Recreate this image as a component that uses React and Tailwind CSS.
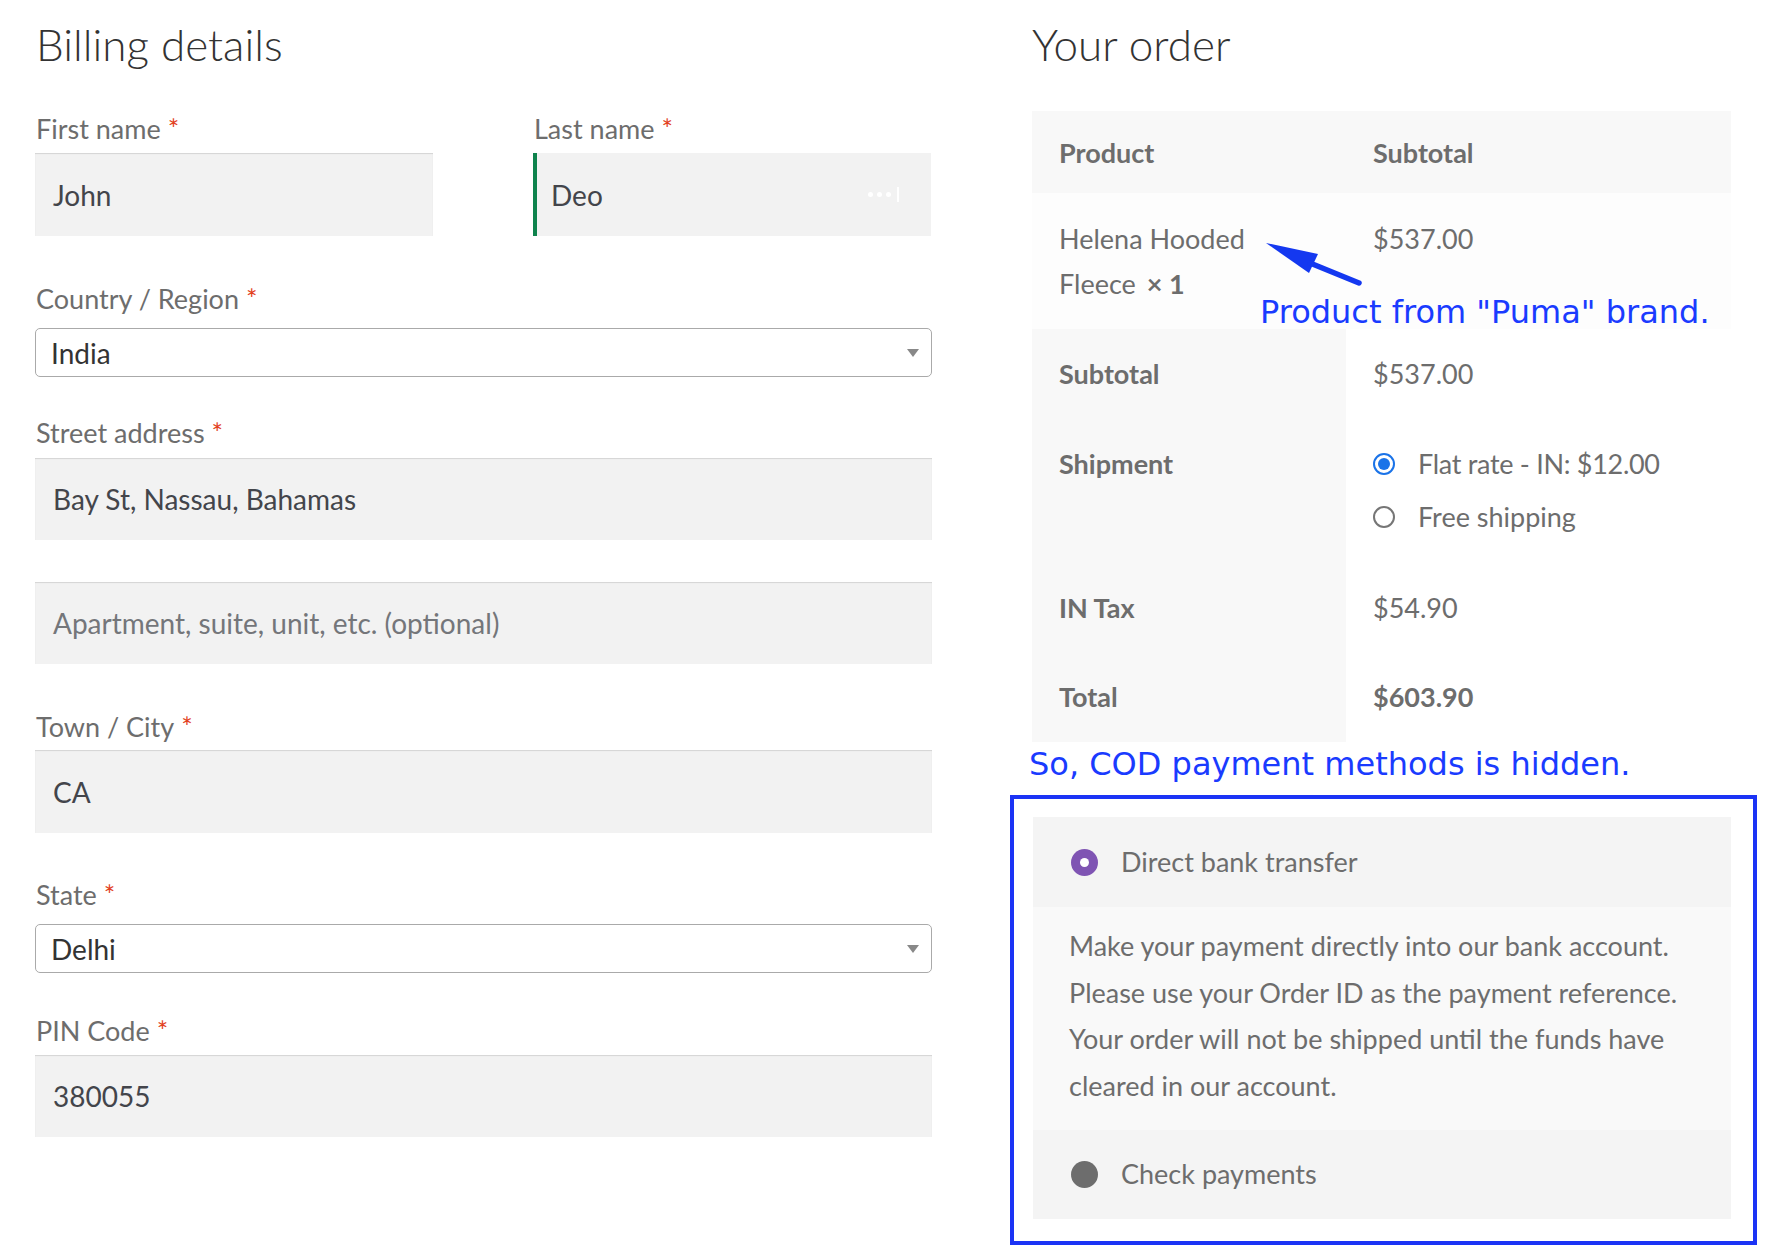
import React from "react";

const Star = () => <span className="text-[#e2401c] ml-[7px]">*</span>;

function Label({ text, className = "" }) {
  return (
    <div className={"h-[36px] leading-[36px] text-[27px] text-[#6d6d6d] whitespace-nowrap " + className}>
      {text}
      <Star />
    </div>
  );
}

function TextInput({ value, placeholder, className = "" }) {
  return (
    <div
      className={
        "h-[82px] bg-[#f2f2f2] shadow-[inset_0_1px_1px_rgba(0,0,0,0.125)] flex items-center pl-[18px] text-[28px] whitespace-nowrap " +
        (placeholder ? "text-[#74767a] " : "text-[#43454b] ") +
        className
      }
    >
      {value || placeholder}
    </div>
  );
}

function SelectBox({ value, className = "" }) {
  return (
    <div
      className={
        "h-[49px] bg-white border border-[#aaaaaa] rounded-[5px] flex items-center pl-[15px] pr-[12px] text-[28px] text-[#333333] " +
        className
      }
    >
      <span>{value}</span>
      <span className="ml-auto w-0 h-0 border-l-[6px] border-r-[6px] border-t-[8px] border-l-transparent border-r-transparent border-t-[#888888]" />
    </div>
  );
}

function Radio({ checked }) {
  if (checked) {
    return (
      <span className="w-[22px] h-[22px] rounded-full border-[2px] border-[#1a73e8] bg-white flex items-center justify-center shrink-0">
        <span className="w-[12px] h-[12px] rounded-full bg-[#1a73e8]" />
      </span>
    );
  }
  return <span className="w-[22px] h-[22px] rounded-full border-[2px] border-[#767676] bg-white shrink-0" />;
}

export default function App() {
  return (
    <div className="relative w-[1772px] h-[1256px] bg-white flex font-['Lato','Open_Sans',sans-serif] overflow-hidden">
      {/* Left column */}
      <div className="ml-[35px] w-[897px] flex flex-col">
        <h3 className="pt-[16px] ml-[1px] h-[71px] leading-[56px] text-[44px] font-light text-[#333333]">Billing details</h3>

        <div className="flex gap-[100px] mt-[40px]">
          <div className="w-[398px] flex flex-col">
            <Label text="First name" className="ml-[1px]" />
            <TextInput value="John" className="mt-[6px] h-[83px]" />
          </div>
          <div className="w-[398px] flex flex-col">
            <Label text="Last name" className="ml-[1px]" />
            <div className="mt-[6px] h-[83px] bg-[#f2f2f2] border-l-[4px] border-[#0f834d] flex items-center pl-[14px] text-[28px] text-[#43454b]">
              <span>Deo</span>
              <div className="ml-auto mr-[32px] flex items-center gap-[4px]">
                <span className="w-[5px] h-[5px] rounded-full bg-white" />
                <span className="w-[5px] h-[5px] rounded-full bg-white" />
                <span className="w-[5px] h-[5px] rounded-full bg-white" />
                <span className="ml-[2px] w-[2px] h-[15px] bg-white" />
              </div>
            </div>
          </div>
        </div>

        <Label text="Country / Region" className="mt-[45px] ml-[1px]" />
        <SelectBox value="India" className="mt-[11px]" />

        <Label text="Street address" className="mt-[38px] ml-[1px]" />
        <TextInput value="Bay St, Nassau, Bahamas" className="mt-[7px]" />
        <TextInput placeholder="Apartment, suite, unit, etc. (optional)" className="mt-[42px]" />

        <Label text="Town / City" className="mt-[45px] ml-[1px]" />
        <TextInput value="CA" className="mt-[5px] h-[83px]" />

        <Label text="State" className="mt-[44px] ml-[1px]" />
        <SelectBox value="Delhi" className="mt-[11px]" />

        <Label text="PIN Code" className="mt-[40px] ml-[1px]" />
        <TextInput value="380055" className="mt-[6px]" />
      </div>

      {/* Right column */}
      <div className="ml-[100px] w-[699px] flex flex-col">
        <h3 className="pt-[16px] h-[71px] leading-[56px] text-[44px] font-light text-[#333333]">Your order</h3>

        <div className="mt-[40px] flex flex-col text-[27px] text-[#6d6d6d] leading-[45px]">
          <div className="h-[82px] bg-[#f8f8f8] flex items-center font-bold">
            <div className="w-[314px] pl-[27px]">Product</div>
            <div className="pl-[27px]">Subtotal</div>
          </div>
          <div className="h-[136px] bg-[#fdfdfd] flex pt-[23px]">
            <div className="w-[314px] pl-[27px]">
              Helena Hooded
              <br />
              Fleece <span className="font-bold ml-[4px]">× 1</span>
            </div>
            <div className="pl-[27px]">$537.00</div>
          </div>
          <div className="h-[89px] flex">
            <div className="w-[314px] pl-[27px] pt-[22px] bg-[#f8f8f8] font-bold">Subtotal</div>
            <div className="pl-[27px] pt-[22px]">$537.00</div>
          </div>
          <div className="h-[145px] flex">
            <div className="w-[314px] pl-[27px] pt-[23px] bg-[#f8f8f8] font-bold">Shipment</div>
            <div className="pl-[27px] pt-[23px] flex flex-col gap-[8px]">
              <div className="flex items-center gap-[23px]">
                <Radio checked />
                <span className="tracking-[-0.3px]">Flat rate - IN: $12.00</span>
              </div>
              <div className="flex items-center gap-[23px]">
                <Radio />
                <span>Free shipping</span>
              </div>
            </div>
          </div>
          <div className="h-[89px] flex">
            <div className="w-[314px] pl-[27px] pt-[22px] bg-[#f8f8f8] font-bold">IN Tax</div>
            <div className="pl-[27px] pt-[22px]">$54.90</div>
          </div>
          <div className="h-[90px] flex">
            <div className="w-[314px] pl-[27px] pt-[22px] bg-[#f8f8f8] font-bold">Total</div>
            <div className="pl-[27px] pt-[22px] font-bold">$603.90</div>
          </div>
        </div>

        <div className="mt-[4px] ml-[-3px] leading-[36px] text-[32px] text-[#1a3bff] font-['DejaVu_Sans',sans-serif] whitespace-nowrap">
          So, COD payment methods is hidden.
        </div>

        <div className="mt-[13px] ml-[-22px] w-[747px] border-[4px] border-[#1b33f5] pl-[19px] pt-[18px] pb-[22px]">
          <div className="w-[698px] flex flex-col text-[27px] text-[#6d6d6d]">
            <div className="h-[90px] bg-[#f4f4f4] flex items-center pl-[38px]">
              <span className="w-[27px] h-[27px] rounded-full bg-[#7f54b3] flex items-center justify-center shrink-0">
                <span className="w-[9px] h-[9px] rounded-full bg-white" />
              </span>
              <span className="ml-[23px]">Direct bank transfer</span>
            </div>
            <div className="bg-[#f9f9f9] pt-[16px] pb-[20px] pl-[36px] leading-[46.7px] whitespace-nowrap">
              Make your payment directly into our bank account.
              <br />
              Please use your Order ID as the payment reference.
              <br />
              Your order will not be shipped until the funds have
              <br />
              cleared in our account.
            </div>
            <div className="h-[89px] bg-[#f4f4f4] flex items-center pl-[38px]">
              <span className="w-[27px] h-[27px] rounded-full bg-[#6d6d6d] shrink-0" />
              <span className="ml-[23px]">Check payments</span>
            </div>
          </div>
        </div>
      </div>

      {/* Annotation overlay */}
      <div className="absolute left-[1260px] top-[294px] leading-[36px] text-[32px] text-[#1a3bff] font-['DejaVu_Sans',sans-serif] whitespace-nowrap">
        Product from "Puma" brand.
      </div>
      <svg className="absolute left-[1260px] top-[236px]" width="106" height="54" viewBox="0 0 106 54">
        <polygon points="6,7 58,18 49,37" fill="#1438f0" />
        <line x1="50" y1="27" x2="99" y2="47" stroke="#1438f0" strokeWidth="5.5" strokeLinecap="round" />
      </svg>
    </div>
  );
}
